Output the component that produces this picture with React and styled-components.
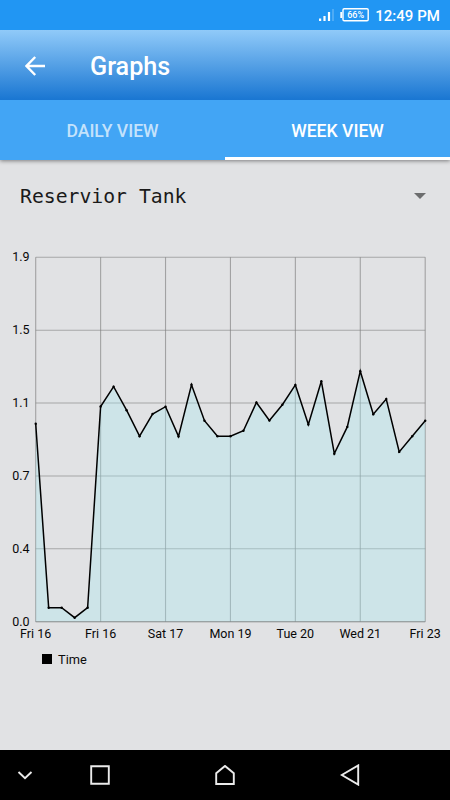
import React, { Component } from 'react';
import styled, { createGlobalStyle } from 'styled-components';

const GlobalStyle = createGlobalStyle`
    body {
        margin: 0;
        font-family: Roboto, sans-serif;
    }
`;

const Screen = styled.div`
    display: flex;
    flex-direction: column;
    width: 450px;
    height: 800px;
    overflow: hidden;
    background-color: #e1e2e4;
`;

const StatusBar = styled.div`
    display: flex;
    align-items: center;
    justify-content: flex-end;
    flex: 0 0 30px;
    box-sizing: border-box;
    padding-right: 10px;
    color: white;
    background-color: #2196f3;
`;

const StatusIcons = styled.svg`
    display: block;
    margin-right: 6px;
`;

const Clock = styled.span`
    font-size: 15px;
    font-weight: 500;
    line-height: 28px;
    letter-spacing: 0.05px;
    padding-top: 2px;
`;

const Header = styled.header`
    display: flex;
    align-items: center;
    flex: 0 0 70px;
    z-index: 2;
    box-sizing: border-box;
    padding: 1px 0 0 25px;
    color: white;
    background: linear-gradient(#90caf9, #1976d2);
`;

const BackButton = styled.button`
    display: flex;
    width: 65px;
    padding: 0;
    border: 0;
    color: inherit;
    background: none;
`;

const Title = styled.h1`
    margin: 0;
    padding-top: 2px;
    font-size: 25.2px;
    font-weight: 500;
    line-height: 30px;
`;

const Tabs = styled.nav`
    display: flex;
    flex: 0 0 60px;
    z-index: 1;
    background-color: #42a5f5;
    box-shadow: 0 1px 4px rgba(0, 0, 0, 0.45);
`;

const Tab = styled.button`
    flex: 1;
    box-sizing: border-box;
    padding: 5px 0 0;
    border: 0;
    border-bottom: 3px solid ${props => (props.$active ? 'white' : 'transparent')};
    font-family: inherit;
    font-size: 17.6px;
    font-weight: 500;
    color: ${props => (props.$active ? 'white' : 'rgba(255, 255, 255, 0.7)')};
    background: none;
`;

const Main = styled.main`
    display: flex;
    flex-direction: column;
    flex: 1;
`;

const Spinner = styled.div`
    display: flex;
    align-items: center;
    justify-content: space-between;
    flex: 0 0 72px;
    padding: 0 24px 0 20px;
`;

const SpinnerText = styled.span`
    font-family: 'DejaVu Sans Mono', monospace;
    font-size: 19.75px;
    color: #1a1a1a;
`;

const ChartArea = styled.svg`
    display: block;
    font-size: 12.5px;
    fill: #080808;
`;

const Legend = styled.div`
    display: flex;
    align-items: center;
    height: 16px;
    padding: 4px 0 0 42px;
    font-size: 12.8px;
    color: #0c0c0c;
`;

const LegendSwatch = styled.span`
    width: 10px;
    height: 10px;
    margin-right: 6px;
    background-color: black;
`;

const NavBar = styled.footer`
    display: flex;
    align-items: center;
    flex: 0 0 50px;
    background-color: black;
`;

const NavKey = styled.button`
    display: flex;
    justify-content: center;
    width: ${props => props.$width}px;
    padding: 0;
    border: 0;
    background: none;
`;

const NavIcon = styled.svg`
    display: block;
    fill: none;
    stroke: #ebebeb;
    stroke-width: 1.9;
`;

// heights of the line above the zero axis, in chart pixels
const readings = [
    198, 14, 14, 4, 14, 215.2, 235, 211.5, 185.5, 207.7, 215, 185.3, 237, 201,
    185.5, 185.5, 191, 219.2, 201.2, 217, 236.8, 197.3, 240.5, 168, 194.8,
    250.5, 207.5, 222.7, 169.8, 185.5, 201
];
const yLabels = ['1.9', '1.5', '1.1', '0.7', '0.4', '0.0'];
const xLabels = ['Fri 16', 'Fri 16', 'Sat 17', 'Mon 19', 'Tue 20', 'Wed 21', 'Fri 23'];

const LEFT = 35.7;
const RIGHT = 425.2;
const TOP = 25.3;
const BOTTOM = 389.7;

const Chart = () => {
    const points = readings.map((value, i) => [
        LEFT + i * (RIGHT - LEFT) / (readings.length - 1),
        BOTTOM - value
    ]);
    const line = points.map(([x, y]) => `${x.toFixed(2)},${y.toFixed(2)}`).join(' ');

    return (
        <ChartArea width="450" height="415" viewBox="0 0 450 415">
            {yLabels.map((label, i) => {
                const y = TOP + i * (BOTTOM - TOP) / 5;
                return (
                    <g key={label}>
                        <path d={`M${LEFT} ${y}H${RIGHT}`} stroke="#808080" strokeOpacity="0.6" strokeWidth="1.1"/>
                        <text x="29.5" y={y + 3.8} textAnchor="end">{label}</text>
                    </g>
                );
            })}
            {xLabels.map((label, i) => {
                const x = LEFT + i * (RIGHT - LEFT) / 6;
                return (
                    <g key={i}>
                        <path d={`M${x} ${TOP}V${BOTTOM}`} stroke="#808080" strokeOpacity="0.65" strokeWidth="1.1"/>
                        <text x={x} y="406" textAnchor="middle">{label}</text>
                    </g>
                );
            })}
            <polygon points={`${LEFT},${BOTTOM} ${line} ${RIGHT},${BOTTOM}`} fill="#a8e8f0" fillOpacity="0.34"/>
            <path d={`M${LEFT} ${BOTTOM}H${RIGHT}`} stroke="#808080" strokeOpacity="0.6"/>
            <polyline points={line} fill="none" stroke="black" strokeWidth="1.5"/>
            {points.map(([x, y], i) => <circle key={i} cx={x} cy={y} r="1.2" fill="black"/>)}
        </ChartArea>
    );
};

class App extends Component {
    render() {
        return (
            <Screen>
                <GlobalStyle/>
                <StatusBar>
                    <StatusIcons width="52" height="16" viewBox="0 0 52 16">
                        <path d="M2 11.5h2.2V14H2zM6.4 9h2.2v5H6.4zM10.9 5h2.2v9h-2.2z" fill="white"/>
                        <path d="M15 2h2v12h-2z" fill="white" fillOpacity="0.2"/>
                        <rect x="26" y="1.8" width="25.2" height="12" rx="1.2" fill="none" stroke="white" strokeWidth="1.4"/>
                        <path d="M24.2 5v6" stroke="white" strokeWidth="1.8"/>
                        <text x="38.6" y="11" textAnchor="middle" fontSize="9" fontWeight="500" fill="white">66%</text>
                    </StatusIcons>
                    <Clock>12:49 PM</Clock>
                </StatusBar>
                <Header>
                    <BackButton aria-label="Back">
                        <svg width="20" height="20" viewBox="0 0 20 20">
                            <path d="M20 10H1.8M10.2 1L1.5 10l8.7 9" fill="none" stroke="white" strokeWidth="2.4"/>
                        </svg>
                    </BackButton>
                    <Title>Graphs</Title>
                </Header>
                <Tabs>
                    <Tab>DAILY VIEW</Tab>
                    <Tab $active>WEEK VIEW</Tab>
                </Tabs>
                <Main>
                    <Spinner>
                        <SpinnerText>Reservior Tank</SpinnerText>
                        <svg width="12" height="6" viewBox="0 0 12 6">
                            <path d="M0 0h12L6 6z" fill="#6c6d6e"/>
                        </svg>
                    </Spinner>
                    <Chart/>
                    <Legend>
                        <LegendSwatch/>
                        Time
                    </Legend>
                </Main>
                <NavBar>
                    <NavKey $width={50} aria-label="Hide">
                        <NavIcon width="16" height="10" viewBox="0 0 16 10">
                            <path d="M1.5 2L8 8.2 14.5 2"/>
                        </NavIcon>
                    </NavKey>
                    <NavKey $width={100} aria-label="Recent">
                        <NavIcon width="20" height="20" viewBox="0 0 20 20">
                            <path d="M1.2 1.2h17.6v17.6H1.2z"/>
                        </NavIcon>
                    </NavKey>
                    <NavKey $width={150} aria-label="Home">
                        <NavIcon width="20" height="20" viewBox="0 0 20 20">
                            <path d="M1.2 19V8.2L10 .9l8.8 7.3V19z"/>
                        </NavIcon>
                    </NavKey>
                    <NavKey $width={100} aria-label="Back">
                        <NavIcon width="20" height="22" viewBox="0 0 20 22">
                            <path d="M18.2 1.4v19.2L1.8 11z"/>
                        </NavIcon>
                    </NavKey>
                </NavBar>
            </Screen>
        );
    }
}

export default App;
